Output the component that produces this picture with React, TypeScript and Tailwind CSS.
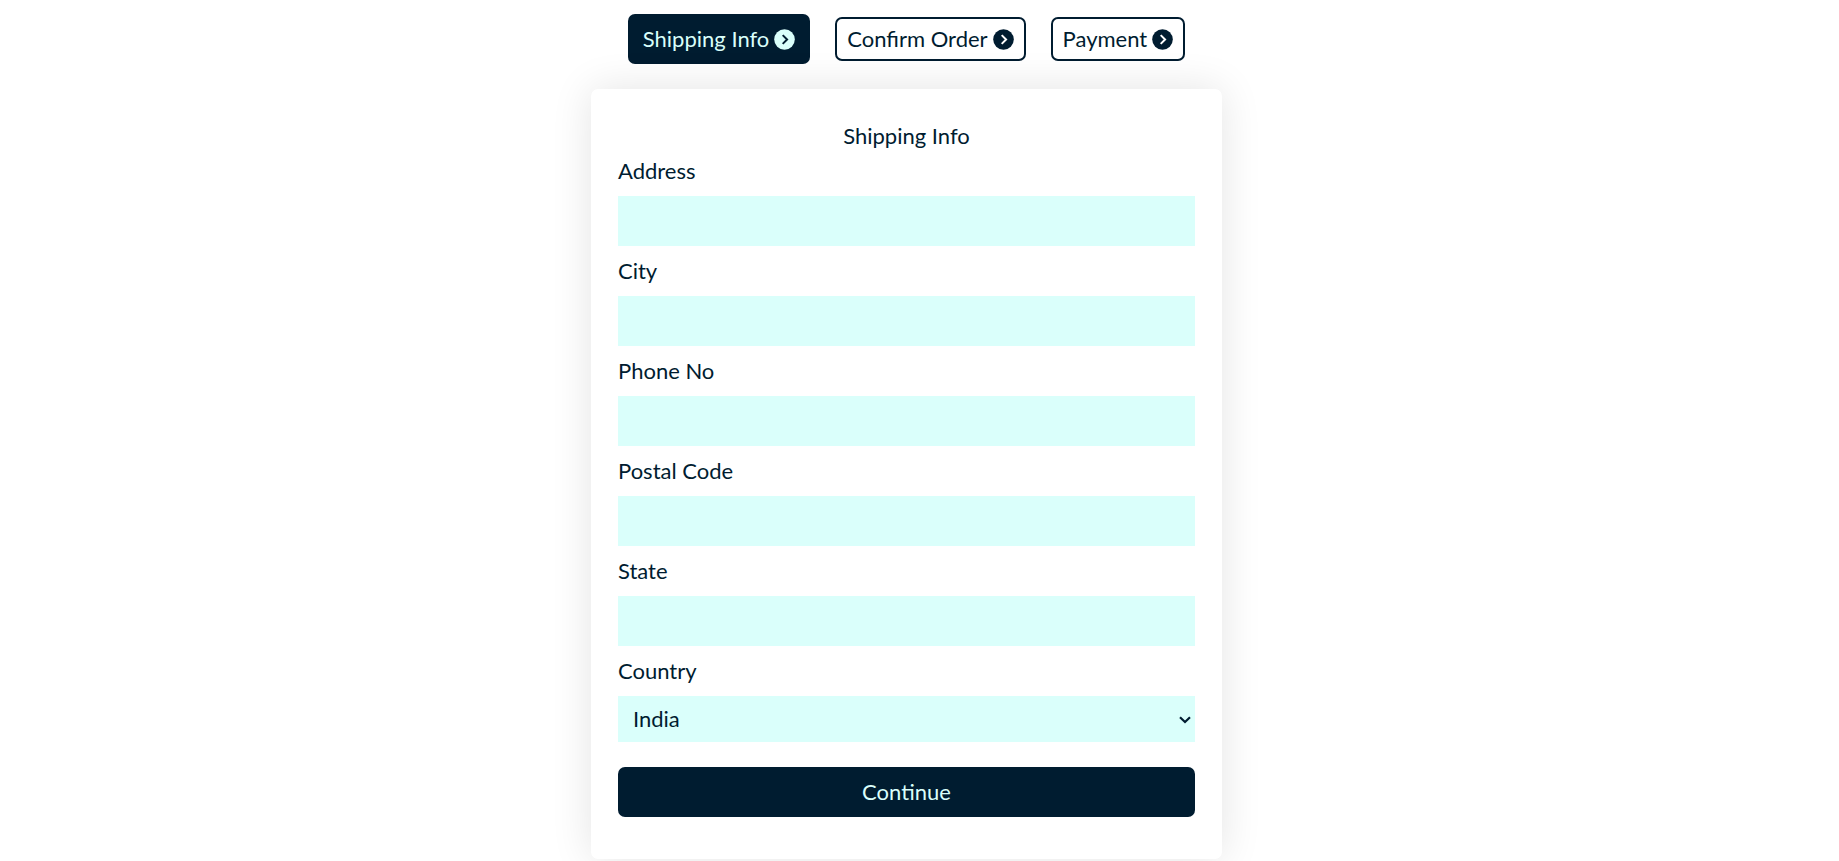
import { useState } from "react";

const fields = [
  { id: "address", label: "Address", type: "text" },
  { id: "city", label: "City", type: "text" },
  { id: "phone", label: "Phone No", type: "tel" },
  { id: "postal", label: "Postal Code", type: "text" },
  { id: "state", label: "State", type: "text" },
];

const steps = ["Shipping Info", "Confirm Order", "Payment"];

function ChevronCircle({ mark }: { mark: string }) {
  return (
    <svg className="size-[21px] shrink-0" viewBox="0 0 21 21" fill="none" aria-hidden="true">
      <circle cx="10.5" cy="10.5" r="10.3" fill="currentColor" />
      <path d="M8.700 6.100l4.400 4.400-4.400 4.400" className={mark} strokeWidth="2" />
    </svg>
  );
}

function Steps({ current }: { current: number }) {
  return (
    <nav aria-label="Checkout steps" className="flex flex-wrap items-center justify-center gap-[25px]">
      {steps.map((step, i) => (
        <button
          key={step}
          type="button"
          aria-current={i === current ? "step" : undefined}
          className={
            i === current
              ? "flex h-[50px] items-center gap-[5px] rounded-[7px] bg-[#001c30] px-[15px] text-[#dafffb]"
              : "flex h-11 items-center gap-[5px] rounded-[7px] border-2 border-[#001c30] px-[10px]"
          }
        >
          {step}
          <ChevronCircle mark={i === current ? "stroke-[#001c30]" : "stroke-white"} />
        </button>
      ))}
    </nav>
  );
}

export default function App() {
  const [country, setCountry] = useState("India");

  return (
    <div className="flex min-h-screen flex-col items-center gap-[25px] bg-white pt-[14px] pr-[26px] pb-[2px] font-['Lato',sans-serif] text-[22px] leading-[30px] text-[#001c30]">
      <Steps current={0} />
      <form
        onSubmit={(e) => e.preventDefault()}
        className="flex w-full max-w-[631px] flex-col rounded-[7px] bg-white px-[27px] pt-8 pb-[42px] shadow-[0_0_42px_rgba(0,0,0,0.11)]"
      >
        <h1 className="mb-[5px] text-center">Shipping Info</h1>
        <div className="flex flex-col gap-[10px]">
          {fields.map((field) => (
            <div key={field.id} className="flex flex-col gap-[10px]">
              <label htmlFor={field.id}>{field.label}</label>
              <input id={field.id} type={field.type} className="h-[50px] w-full bg-[#dafffb] px-[15px] outline-none" />
            </div>
          ))}
          <div className="flex flex-col gap-[10px]">
            <label htmlFor="country">Country</label>
            <div className="relative">
              <select
                id="country"
                value={country}
                onChange={(e) => setCountry(e.target.value)}
                className="block h-[46px] w-full appearance-none bg-[#dafffb] px-[15px] outline-none"
              >
                <option>India</option>
              </select>
              <svg
                className="pointer-events-none absolute top-5 right-1 h-2 w-3"
                viewBox="0 0 12 8"
                fill="none"
                stroke="currentColor"
                strokeWidth="2.200"
                aria-hidden="true"
              >
                <path d="M1 1.200l5 4.800 5-4.800" />
              </svg>
            </div>
          </div>
        </div>
        <button type="submit" className="mt-[25px] h-[50px] rounded-[7px] bg-[#001c30] text-[#dafffb]">
          Continue
        </button>
      </form>
    </div>
  );
}
